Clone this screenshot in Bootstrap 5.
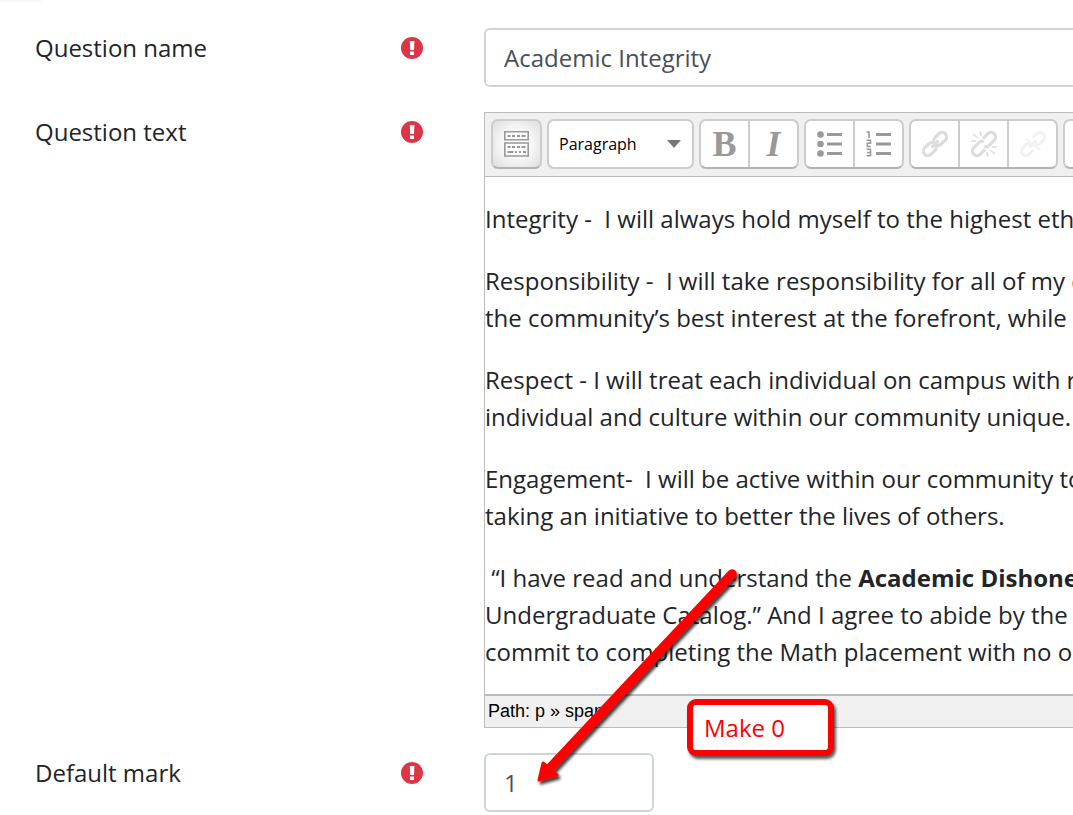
<!DOCTYPE html>
<html lang="en">
<head>
<meta charset="utf-8">
<meta name="viewport" content="width=device-width, initial-scale=1">
<title>Edit question</title>
<link href="https://cdn.jsdelivr.net/npm/bootstrap@5.3.0/dist/css/bootstrap.min.css" rel="stylesheet">
<style>
  body { font-family: "Open Sans", "Noto Sans", sans-serif; font-size: 24px; line-height: 37px; color: #212529; overflow-x: hidden; }
  .top-tab { width: 42px; height: 2px; background: #f8f8f8; border-radius: 0 0 4px 0; }
  .question-form { padding: 26px 0 4px 35px; display: grid; gap: 25px; }
  .field-row { display: grid; grid-template-columns: 388px minmax(0, 1fr); column-gap: 61px; }
  .field-head { padding-top: 1px; }
  .field-input { height: 59px; border: 2px solid #ced4da; border-radius: 6px; padding: 0 18px; color: #495057; font-size: 24px; }
  .field-bleed { border-right: 0; border-radius: 6px 0 0 6px; }
  .mark-input { width: 170px; }
  .editor { border: 1px solid #bbb; border-right: 0; overflow: hidden; }
  .editor-bar { background: #f0f0f0; border-bottom: 1px solid #bbb; padding: 6px 0 7px 6px; gap: 5px; overflow: hidden; }
  .tool-group { border: 2px solid #ccc; border-bottom-color: #b3b3b3; border-radius: 7px; background: #fff; height: 50px; overflow: hidden; flex: none; }
  .tool { width: 47px; height: 100%; padding: 0; border: 0; border-radius: 0; background: transparent; color: #999; display: flex; align-items: center; justify-content: center; box-sizing: content-box; }
  .tool + .tool { border-left: 2px solid #ccc; }
  .tool-glyph { font-family: "Liberation Serif", serif; font-size: 36px; line-height: 46px; }
  .tool-on { background: radial-gradient(#fff 30%, #ddd); }
  .style-pick { width: 147px; height: 50px; flex: none; border: 2px solid #ccc; border-radius: 7px; color: #000; font-size: 16px; padding: 0 34px 0 10px;
    background: #fff url("data:image/svg+xml,%3Csvg xmlns='http://www.w3.org/2000/svg' viewBox='0 0 14 8'%3E%3Cpath fill='%23777' d='M0 0h14L7 8z'/%3E%3C/svg%3E") no-repeat right 11px center / 14px 8px; }
  .editor-text { padding-top: 23px; white-space: nowrap; height: 517px; overflow: hidden; }
  .editor-text p { margin-bottom: 25px; }
  .editor-path { background: #f0f0f0; border-top: 2px solid #bbb; font: 18px/31px "Liberation Sans", Arial, sans-serif; color: #000; padding-left: 3px; }
  .note-arrow { position: absolute; left: 45px; bottom: 20px; overflow: visible; pointer-events: none; }
  .note-box { position: absolute; left: 203px; bottom: 56px; width: 147px; height: 57px; border: 6px solid #f00; border-radius: 9px; background: #fff; color: #f00; padding: 4px 11px; box-shadow: 2px 3px 3px rgba(0,0,0,.65); }
</style>
</head>
<body>
<div class="top-tab"></div>
<svg width="0" height="0" class="position-absolute" aria-hidden="true">
  <symbol id="required" viewBox="0 0 22 22">
    <circle cx="11" cy="11" r="11" fill="#dc3545"/>
    <path fill="#fff" d="M8.800 4h4.600l-.4 9H9.200zM9 14.500h4v3.500H9z"/>
  </symbol>
</svg>
<form class="question-form">
  <div class="field-row">
    <div class="field-head d-flex justify-content-between">
      <label for="qname">Question name</label>
      <svg class="mt-2" width="22" height="22" role="img" aria-label="Required"><use href="#required"/></svg>
    </div>
    <input id="qname" class="form-control field-input field-bleed" type="text" value="Academic Integrity">
  </div>

  <div class="field-row">
    <div class="field-head d-flex justify-content-between align-items-start">
      <label id="qtext-label" for="style-pick">Question text</label>
      <svg class="mt-2" width="22" height="22" role="img" aria-label="Required"><use href="#required"/></svg>
    </div>
    <div class="editor">
      <div class="editor-bar d-flex" role="toolbar" aria-label="Formatting">
        <div class="tool-group tool-on">
          <button type="button" class="btn tool" aria-label="Toggle toolbar">
            <svg width="25" height="26" viewBox="0 0 25 26" fill="none" stroke="#999" stroke-width="1.600">
              <path d="M.8.8h23.400v8H.8zM.8 12h23.400v13H.8z"/>
              <path stroke-width="2" d="M3.500 5h3m1.500 0h3m2 0h3m1.500 0h4M3.500 16h3m1.500 0h3m2 0h3m1.500 0h4M3.500 21h6m1.500 0h2m2 0h2m2 0h3"/>
            </svg>
          </button>
        </div>
        <select id="style-pick" class="form-select style-pick" aria-label="Paragraph style"><option>Paragraph</option></select>
        <div class="tool-group d-flex">
          <button type="button" class="btn tool tool-glyph fw-bold" aria-label="Bold">B</button>
          <button type="button" class="btn tool tool-glyph fst-italic fw-bold" aria-label="Italic">I</button>
        </div>
        <div class="tool-group d-flex">
          <button type="button" class="btn tool" aria-label="Bulleted list">
            <svg width="26" height="26" viewBox="0 0 26 26" fill="#999">
              <circle cx="3.500" cy="3.500" r="3.300"/><circle cx="3.500" cy="13" r="3.300"/><circle cx="3.500" cy="22.500" r="3.300"/>
              <path d="M10 2h15v3H10zM10 11.500h15v3H10zM10 21h15v3H10z"/>
            </svg>
          </button>
          <button type="button" class="btn tool" aria-label="Numbered list">
            <svg width="26" height="26" viewBox="0 0 26 26" fill="#999">
              <path d="M10 2h15v3H10zM10 11.500h15v3H10zM10 21h15v3H10z"/>
              <path fill="none" stroke="#999" stroke-width="1.600" d="M.5 1h2.500v6M.5 9.300h4v3H1.300v3.200H5M.5 18.300h4v6.400h-4M1 21.500h3.500"/>
            </svg>
          </button>
        </div>
        <div class="tool-group d-flex">
          <button type="button" class="btn tool" aria-label="Link">
            <svg width="26" height="26" viewBox="0 0 26 26" fill="none" stroke="#ddd" stroke-width="3.200">
              <g transform="rotate(-45 13 13)"><rect x="-1.500" y="8.500" width="14.500" height="9" rx="4.500"/><rect x="13" y="8.500" width="14.500" height="9" rx="4.500"/><path d="M8 13h10"/></g>
            </svg>
          </button>
          <button type="button" class="btn tool" aria-label="Unlink">
            <svg width="26" height="26" viewBox="0 0 26 26" fill="none" stroke="#ddd" stroke-width="3.200">
              <g transform="rotate(-45 13 13)"><path d="M10 17.500H3a4.500 4.500 0 0 1 0-9h8q3 0 3 3M16 8.500h7a4.500 4.500 0 0 1 0 9h-8q-3 0-3-3"/></g>
              <path stroke-width="1.600" d="M9 0l1 5M2 3l5 4M0 10h5M17 26l-1-5M24 23l-5-4M26 16h-5"/>
            </svg>
          </button>
          <button type="button" class="btn tool" aria-label="Prevent automatic links">
            <svg width="26" height="26" viewBox="0 0 26 26" fill="none" stroke="#f1f1f1" stroke-width="3">
              <g transform="rotate(-45 13 13)"><path d="M9 17.500H3a4.500 4.500 0 0 1 0-9h5q3 0 3 3M17 8.500h6a4.500 4.500 0 0 1 0 9h-5q-3 0-3-3M8 13h10"/></g>
              <path stroke-width="2" d="M6 8l14 11"/>
            </svg>
          </button>
        </div>
        <div class="tool-group d-flex">
          <button type="button" class="btn tool" aria-label="More"></button>
        </div>
      </div>
      <div class="editor-text" contenteditable="true" role="textbox" aria-multiline="true" aria-labelledby="qtext-label">
        <p>Integrity -&nbsp; I will always hold myself to the highest eth</p>
        <p>Responsibility -&nbsp; I will take responsibility for all of my c<br>the community’s best interest at the forefront, while h</p>
        <p>Respect - I will treat each individual on campus with re<br>individual and culture within our community unique.</p>
        <p>Engagement-&nbsp; I will be active within our community to<br>taking an initiative to better the lives of others.</p>
        <p>&nbsp;“I have read and understand the <b>Academic Dishones</b><br>Undergraduate Catalog.” And I agree to abide by the<br>commit to completing the Math placement with no ou</p>
      </div>
      <div class="editor-path">Path: p » span</div>
    </div>
  </div>

  <div class="field-row">
    <div class="field-head d-flex justify-content-between">
      <label for="mark-value">Default mark</label>
      <svg class="mt-2" width="22" height="22" role="img" aria-label="Required"><use href="#required"/></svg>
    </div>
    <div class="position-relative">
      <input id="mark-value" class="form-control field-input mark-input" type="text" value="1">
      <!-- Callout pointing at the mark field -->
      <svg class="note-arrow" width="210" height="224" viewBox="0 0 210 224" aria-hidden="true">
        <defs><filter id="drop" x="-10%" y="-10%" width="125%" height="125%"><feDropShadow dx="2" dy="3" stdDeviation="1.500" flood-color="#000" flood-opacity=".75"/></filter></defs>
        <g filter="url(#drop)" fill="#f00" stroke="#f00">
          <path d="M203 6 22 199" stroke-width="9.500" stroke-linecap="round"/>
          <path d="M14 195 10 212 28 207z" stroke-width="3" stroke-linejoin="round"/>
        </g>
      </svg>
      <div class="note-box">Make 0</div>
    </div>
  </div>
</form>
<script src="https://cdn.jsdelivr.net/npm/bootstrap@5.3.0/dist/js/bootstrap.bundle.min.js"></script>
</body>
</html>
